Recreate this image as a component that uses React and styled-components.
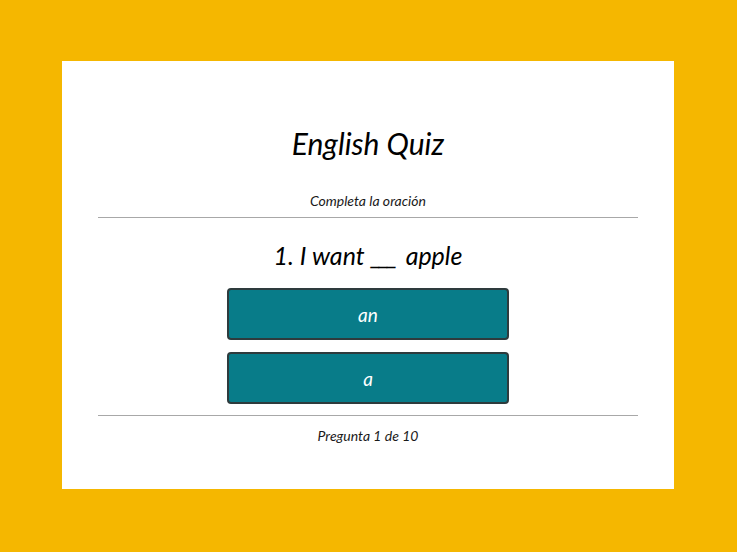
import React from 'react';
import styled, { createGlobalStyle } from 'styled-components';

const GlobalStyle = createGlobalStyle`
  * {
    margin: 0;
    padding: 0;
    box-sizing: border-box;
  }
  body {
    background: #f5b700;
    font-family: Lato, "Open Sans", sans-serif;
    font-style: italic;
  }
`;

const Pagina = styled.div`
  min-height: 552px;
  padding-top: 61px;
  padding-right: 1px;
`;

const Tarjeta = styled.section`
  width: 612px;
  height: 428px;
  margin: 0 auto;
  background: #fff;
  padding: 62px 36px 0;
  display: flex;
  flex-direction: column;
  align-items: center;
  color: #000;
`;

const Titulo = styled.h1`
  font-size: 30px;
  font-weight: 400;
  line-height: 40px;
`;

const Subtitulo = styled.p`
  margin-top: 30px;
  font-size: 14px;
  line-height: 16px;
  color: #1a1a1a;
`;

const Separador = styled.hr`
  width: 100%;
  border: none;
  border-top: 1px solid #a8a8a8;
  margin-top: ${(p) => p.$top}px;
`;

const Pregunta = styled.h2`
  margin-top: 22px;
  font-size: 25px;
  font-weight: 400;
  line-height: 30px;
`;

const Hueco = styled.span`
  letter-spacing: -3px;
  margin-right: 5px;
`;

const Opciones = styled.div`
  margin-top: 18px;
  display: flex;
  flex-direction: column;
  gap: 12px;
`;

const Opcion = styled.button`
  width: 282px;
  height: 52px;
  background: #087c89;
  border: 2px solid #2e3b3d;
  border-radius: 4px;
  color: #fff;
  font-family: Lato, "Open Sans", sans-serif;
  font-style: italic;
  font-size: 19px;
  cursor: pointer;
`;

const Progreso = styled.p`
  margin-top: 12px;
  font-size: 14px;
  line-height: 16px;
  color: #1a1a1a;
`;

const opciones = ['an', 'a'];

export default function App() {
  return (
    <Pagina>
      <GlobalStyle />
      <Tarjeta>
        <Titulo>English Quiz</Titulo>
        <Subtitulo>Completa la oración</Subtitulo>
        <Separador $top={8} />
        <Pregunta>
          1. I want <Hueco>___</Hueco> apple
        </Pregunta>
        <Opciones>
          {opciones.map((o) => (
            <Opcion key={o}>{o}</Opcion>
          ))}
        </Opciones>
        <Separador $top={11} />
        <Progreso>Pregunta 1 de 10</Progreso>
      </Tarjeta>
    </Pagina>
  );
}
